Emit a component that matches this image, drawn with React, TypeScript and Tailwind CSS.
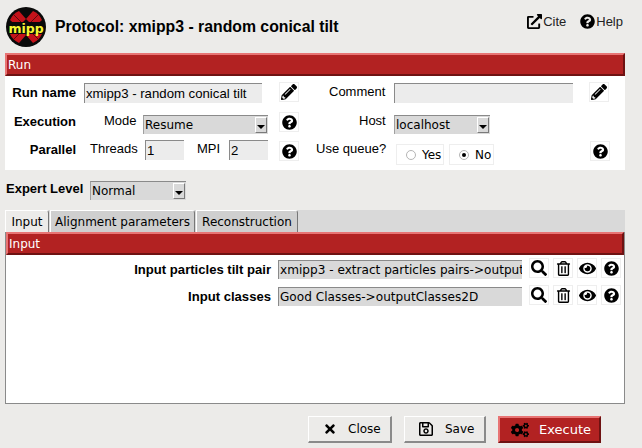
import React from "react";
import { FaPencilAlt, FaQuestionCircle, FaSearch, FaRegTrashAlt, FaEye, FaTimes, FaRegSave, FaCogs, FaExternalLinkAlt } from "react-icons/fa";

const sans = "font-['Liberation_Sans',Arial,sans-serif]";
const dejavu = "font-['DejaVu_Sans',sans-serif]";

function Logo() {
  return (
    <svg width="40" height="40" viewBox="0 0 40 40" className="shrink-0">
      <circle cx="20" cy="20" r="20" fill="#0a0a0a" />
      <path d="M13 4 A17.5 17.5 0 0 0 4 13 L12 20 L20 12 Z" fill="#c4121a" />
      <path d="M27 4 A17.5 17.5 0 0 1 36 13 L28 20 L20 12 Z" fill="#c4121a" />
      <path d="M4 27 A17.5 17.5 0 0 0 13 36 L20 28 L12 20 Z" fill="#c4121a" />
      <path d="M36 27 A17.5 17.5 0 0 1 27 36 L20 28 L28 20 Z" fill="#c4121a" />
      <path d="M8 8 L32 32 M32 8 L8 32" stroke="#5c0a0e" strokeWidth="1" />
      <rect x="1" y="15" width="38" height="12" rx="2" fill="#0a0a0a" />
      <text x="20" y="25.5" textAnchor="middle" fontFamily="'DejaVu Sans',sans-serif" fontWeight="700" fontSize="12.5" fill="#f7f533">mipp</text>
    </svg>
  );
}

function IconBtn({ children, className = "" }: { children: React.ReactNode; className?: string }) {
  return (
    <span className={"flex h-[20px] w-[20px] shrink-0 items-center justify-center border border-[#eeeeee] bg-white text-black " + className}>
      {children}
    </span>
  );
}

function Field({ value, width, font = sans, size = "text-[13.2px]", height = "h-[20px]", bg = "bg-[#ececec]" }: { value: string; width: string; font?: string; size?: string; height?: string; bg?: string }) {
  return (
    <span className={`flex shrink-0 items-center overflow-hidden whitespace-nowrap border-t border-l border-t-[#8a8a8a] border-l-[#8a8a8a] pl-[1px] text-black ${bg} ${height} ${size} ${font} ${width}`}>
      {value}
    </span>
  );
}

function Select({ value, width }: { value: string; width: string }) {
  return (
    <span className={`flex h-[19px] shrink-0 items-center justify-between border-t border-l border-t-[#8a8a8a] border-l-[#a0a0a0] bg-[#d9d9d9] pl-[1px] text-[12px] text-black ${dejavu} ${width}`}>
      <span>{value}</span>
      <span className="mr-[1px] flex h-[16px] w-[12px] items-end justify-center border-r border-b border-r-[#7a7a7a] border-b-[#7a7a7a] border-t border-l border-t-white border-l-white bg-[#d9d9d9] pb-[3px]">
        <span className="h-0 w-0 border-x-[4px] border-t-[4px] border-x-transparent border-t-black" />
      </span>
    </span>
  );
}

function SectionBar({ title }: { title: string }) {
  return (
    <div className={`flex h-[23px] items-center border-t-2 border-l-2 border-r-2 border-b-2 border-t-[#e87474] border-l-[#e87474] border-r-[#6e1212] border-b-[#6e1212] bg-[#b22222] pl-[1px] text-[12px] text-white ${dejavu}`}>
      {title}
    </div>
  );
}

function Radio({ label, checked, width }: { label: string; checked?: boolean; width: string }) {
  return (
    <span className={`flex h-[21px] shrink-0 items-center border border-[#eeeeee] pl-[9px] text-[12px] text-black ${dejavu} ${width}`}>
      <span className="mr-[6px] flex h-[10px] w-[10px] shrink-0 items-center justify-center rounded-full border border-[#b5b5b5] bg-white">
        {checked && <span className="h-[4px] w-[4px] rounded-full bg-black" />}
      </span>
      {label}
    </span>
  );
}

function Tab({ label, active, width }: { label: string; active?: boolean; width: string }) {
  return (
    <span className={`flex h-[22px] shrink-0 items-center justify-center whitespace-nowrap rounded-tr-[3px] border-t border-l border-r border-t-white border-l-white border-r-[#777777] text-[12px] text-black ${dejavu} ${active ? "bg-[#ecebe9]" : "bg-[#cfcfcf]"} ${width}`}>
      {label}
    </span>
  );
}

function ActionIcons() {
  return (
    <div className="ml-[7px] flex gap-[4px]">
      <IconBtn><FaSearch size={16} /></IconBtn>
      <IconBtn><FaRegTrashAlt size={15} /></IconBtn>
      <IconBtn><FaEye size={17} /></IconBtn>
      <IconBtn><FaQuestionCircle size={15} /></IconBtn>
    </div>
  );
}

function ParamRow({ label, value, margin }: { label: string; value: string; margin: string }) {
  return (
    <div className={`flex h-[20px] items-center text-[13.1px] ${margin}`}>
      <span className="mt-[4px] w-[265px] text-right font-bold">{label}</span>
      <span className="ml-[7px] mt-[3px]">
        <Field value={value} width="w-[244px]" font={dejavu} size="text-[12.1px]" height="h-[19px]" bg="bg-[#d9d9d9]" />
      </span>
      <ActionIcons />
    </div>
  );
}

export default function App() {
  return (
    <div className={`flex h-[448px] w-[642px] flex-col overflow-hidden bg-[#ecebe9] text-black ${sans}`}>
      <header className="flex h-[53px] shrink-0 items-center pl-[6px]">
        <Logo />
        <h1 className={`ml-[9px] text-[15.8px] font-bold ${sans}`}>Protocol: xmipp3 - random conical tilt</h1>
        <div className="ml-auto mr-[19px] mb-[10px] flex items-center text-[13px]">
          <FaExternalLinkAlt size={15} className="mr-[1px]" />
          <span className="text-[#222]">Cite</span>
          <FaQuestionCircle size={15} className="ml-[14px] mr-[1px]" />
          <span className="text-[#222]">Help</span>
        </div>
      </header>

      <section className="mx-[5px] h-[117px] w-[620px] shrink-0 bg-white">
        <SectionBar title="Run" />
        <div className="mt-[6px] flex h-[20px] items-center text-[13px]">
          <span className="mt-[2px] w-[71px] text-right text-[13.2px] font-bold">Run name</span>
          <span className="ml-[8px] mt-[2px]"><Field value="xmipp3 - random conical tilt" width="w-[178px]" /></span>
          <IconBtn className="ml-[17px]"><FaPencilAlt size={16} /></IconBtn>
          <span className="ml-[30px] w-[57px]">Comment</span>
          <span className="ml-[8px] mt-[2px]"><Field value="" width="w-[179px]" /></span>
          <IconBtn className="ml-[16px]"><FaPencilAlt size={16} /></IconBtn>
        </div>
        <div className="mt-[10px] flex h-[20px] items-center text-[13px]">
          <span className="w-[71px] text-right font-bold">Execution</span>
          <span className="ml-[28px] mb-[3px] w-[32px]">Mode</span>
          <span className="ml-[7px] mt-[5px]"><Select value="Resume" width="w-[125px]" /></span>
          <IconBtn className="ml-[11px]"><FaQuestionCircle size={15} /></IconBtn>
          <span className="ml-[60px] mb-[3px] w-[28px]">Host</span>
          <span className="ml-[7px] mt-[5px]"><Select value="localhost" width="w-[96px]" /></span>
        </div>
        <div className="mt-[9px] flex h-[20px] items-center text-[13px]">
          <span className="mb-[2px] w-[71px] text-right font-bold">Parallel</span>
          <span className="ml-[14px] mb-[4px] w-[46px]">Threads</span>
          <span className="ml-[9px] mb-[2px]"><Field value="1" width="w-[39px]" /></span>
          <span className="ml-[13px] mb-[4px] w-[23px]">MPI</span>
          <span className="ml-[9px] mb-[2px]"><Field value="2" width="w-[39px]" /></span>
          <IconBtn className="ml-[11px]"><FaQuestionCircle size={15} /></IconBtn>
          <span className="ml-[17px] mb-[4px] w-[71px] whitespace-nowrap">Use queue?</span>
          <span className="ml-[9px] mt-[7px] flex gap-[5px]">
            <Radio label="Yes" width="w-[48px]" />
            <Radio label="No" checked width="w-[45px]" />
          </span>
          <IconBtn className="ml-[96px]"><FaQuestionCircle size={15} /></IconBtn>
        </div>
      </section>

      <div className="mt-[11px] flex h-[19px] shrink-0 items-center pl-[6px] text-[13px]">
        <span className="mb-[4px] w-[84px] font-bold">Expert Level</span>
        <Select value="Normal" width="w-[96px]" />
      </div>

      <div className="mx-[5px] mt-[10px] flex h-[22px] w-[620px] shrink-0 gap-[1px] bg-[#d9d9d9]">
        <Tab label="Input" active width="w-[44px]" />
        <Tab label="Alignment parameters" width="w-[145px]" />
        <Tab label="Reconstruction" width="w-[102px]" />
      </div>

      <section className="mx-[5px] h-[172px] w-[620px] shrink-0 border border-t-0 border-[#8a8a8a] bg-white">
        <SectionBar title="Input" />
        <ParamRow label="Input particles tilt pair" value="xmipp3 - extract particles pairs->output" margin="mt-[3px]" />
        <ParamRow label="Input classes" value="Good Classes->outputClasses2D" margin="mt-[7px]" />
      </section>

      <footer className={`mt-[12px] flex h-[27px] shrink-0 text-[12px] ${dejavu}`}>
        <span className="ml-[308px] flex w-[84px] items-center border-t border-l border-r-2 border-b-2 border-t-white border-l-white border-r-[#8a8a8a] border-b-[#8a8a8a] pl-[14px]">
          <FaTimes size={14} className="mr-[11px]" />Close
        </span>
        <span className="ml-[12px] flex w-[82px] items-center border-t border-l border-r-2 border-b-2 border-t-white border-l-white border-r-[#8a8a8a] border-b-[#8a8a8a] pl-[13px]">
          <FaRegSave size={16} className="mr-[11px]" />Save
        </span>
        <span className="ml-[12px] flex w-[103px] items-center border-t-2 border-l-2 border-r-2 border-b-2 border-t-[#e87474] border-l-[#e87474] border-r-[#6e1212] border-b-[#6e1212] bg-[#b22222] pl-[11px] text-[13px] text-white">
          <FaCogs size={18} className="mr-[10px] text-black" />Execute
        </span>
      </footer>
    </div>
  );
}
